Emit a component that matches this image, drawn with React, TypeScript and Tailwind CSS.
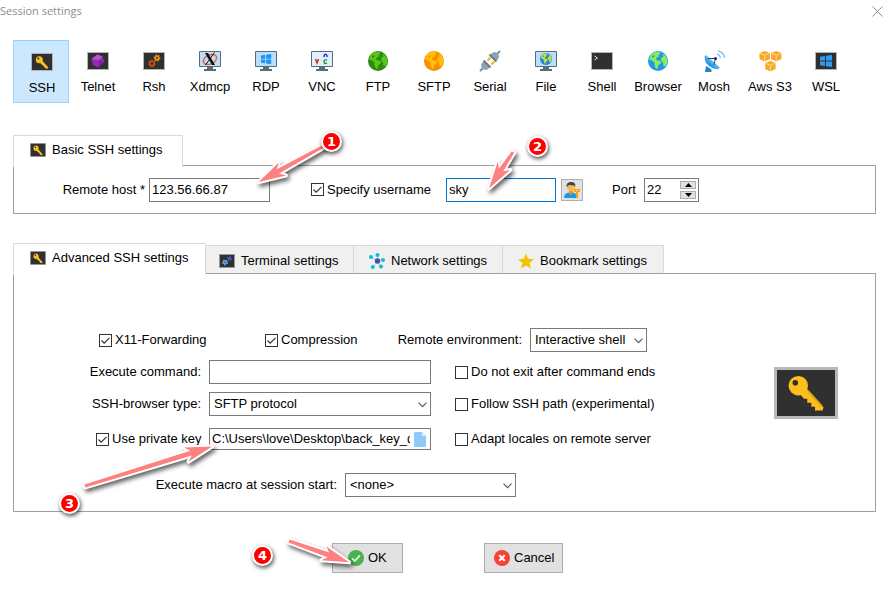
import { useState } from "react";
import type { ReactNode } from "react";
import clsx from "clsx";

/* ---------- icons ---------- */

const KeyIcon = ({ className }: { className: string }) => (
  <svg viewBox="0 0 64 52" className={className} preserveAspectRatio="none" aria-hidden="true">
    <rect width="64" height="52" fill="#b8b8b8" />
    <rect x="3" y="3" width="58" height="46" fill="#303030" />
    <path d="M33 22 L49.500 40.500 L48.500 43.600 H41 V39.700 H37.300 V35.700 H33.300 V31.700 H30 L26 27 Z" fill="#fcbf1e" />
    <path d="M34 24 L48 39.500" stroke="#e3a512" strokeWidth="2" />
    <circle cx="24.300" cy="18.700" r="9.700" fill="#fcbf1e" />
    <circle cx="21.300" cy="15.700" r="2.800" fill="#303030" />
  </svg>
);

/* heavier strokes so the key still reads at 16-22px */
const SmallKeyIcon = ({ className }: { className: string }) => (
  <svg viewBox="0 0 22 18" className={className} preserveAspectRatio="none" aria-hidden="true">
    <rect width="22" height="18" fill="#b4b4b4" />
    <rect x="1" y="1" width="20" height="16" fill="#303030" />
    <path d="M10.500 7 L17 14 V15.500 H14.500 L12.500 13 L10 11 L8.500 9 Z" fill="#fcbf1e" />
    <circle cx="8.300" cy="6.700" r="3.500" fill="#fcbf1e" />
    <circle cx="7.300" cy="5.600" r="1" fill="#303030" />
  </svg>
);

const Frame = ({ children }: { children?: ReactNode }) => (
  <svg viewBox="0 0 22 18" className="w-[22px] h-[18px]" aria-hidden="true">
    <rect width="22" height="18" fill="#b4b4b4" />
    <rect x="1" y="1" width="20" height="16" fill="#303030" />
    {children}
  </svg>
);

const Monitor = ({ children }: { children?: ReactNode }) => (
  <svg viewBox="0 0 22 20" className="w-[22px] h-5" aria-hidden="true">
    <rect width="22" height="16" rx="1" fill="#546e7a" />
    <rect x="1" y="1" width="20" height="14" fill="#bbdefb" />
    <path d="M8 16h6v2h3v2H5v-2h3z" fill="#546e7a" />
    {children}
  </svg>
);

const Gear = ({ cx, cy, r, color }: { cx: number; cy: number; r: number; color: string }) => (
  <g stroke={color} fill="none">
    <circle cx={cx} cy={cy} r={r} strokeWidth="1.5" />
    <circle cx={cx} cy={cy} r={r + 1} strokeWidth="1.2" strokeDasharray="1.4 1.4" />
  </g>
);

const GlobeShape = ({ sea, land }: { sea: string; land: string }) => (
  <>
    <circle cx="10" cy="10" r="10" fill={sea} />
    <path
      d="M6 1.300 L11 .8 L12.500 2.500 L10.500 4 L11 5.500 L8.500 6.500 L8 8.500 L10 9.500 L12.500 10 L13 12 L10.500 14 L9.500 17.500 L8 18 L6.500 14 L6.500 11.500 L4 9.500 L1.300 8.500 A9 9 0 0 1 6 1.300Z"
      fill={land}
    />
    <path d="M14.500 3 L17 4 A9 9 0 0 1 19.300 9 L19 12.500 L17.500 15.500 L15.500 15 L15 11.500 L13 9.500 L13.500 6.500 L15.500 5.500Z" fill={land} />
    <path d="M4 5.500l2-1.500 1 1-2 2z" fill={sea} />
  </>
);

const Globe = ({ sea, land }: { sea: string; land: string }) => (
  <svg viewBox="0 0 20 20" className="size-5" aria-hidden="true">
    <GlobeShape sea={sea} land={land} />
  </svg>
);

const WindowsShape = ({ color }: { color: string }) => (
  <path d="M0 1.800 L5 1 V5.500 H0Z M6 .8 L12 0 V5.500 H6Z M0 6.500 H5 V11 L0 10.200Z M6 6.500 H12 V12 L6 11.200Z" fill={color} />
);

const TelnetIcon = () => (
  <Frame>
    <path d="M10.500 2.500 L15.500 4.500 L17 10 L11.500 15.500 L6 13 L4.500 7Z" fill="#9c27b0" />
    <path d="M10.500 2.500 L15.500 4.500 L12 8 L4.500 7Z" fill="#ba55cb" />
    <path d="M12 8 L17 10 L11.500 15.500Z" fill="#7b1fa2" />
  </Frame>
);

const RshIcon = () => (
  <Frame>
    <Gear cx={9} cy={11.5} r={2.2} color="#d9500b" />
    <Gear cx={14} cy={6} r={1.8} color="#f39a16" />
  </Frame>
);

const XdmcpIcon = () => (
  <Monitor>
    <ellipse cx="11" cy="8.500" rx="7" ry="4.500" fill="none" stroke="#f0632a" strokeWidth="1.500" transform="rotate(-25 11 8.500)" />
    <path d="M6 2h3l7 12h-3z" fill="#111" />
    <path d="M15.500 1.500L6.500 14" stroke="#111" strokeWidth="1" />
  </Monitor>
);

const RdpIcon = () => (
  <Monitor>
    <g transform="translate(6 3) scale(.85)">
      <WindowsShape color="#1e96f3" />
    </g>
  </Monitor>
);

const VncIcon = () => (
  <Monitor>
    <rect x="1" y="1" width="20" height="14" fill="#e1effa" />
    <g fill="none" strokeWidth="1.400">
      <path d="M4.500 8l1.500 4 1.500-4" stroke="#e01b1b" />
      <path d="M13 6V4.500q1.500-2.500 3 0V6" stroke="#2424e8" />
      <path d="M16 9.200q-3-1-3 1.500t3 1.500" stroke="#159a2b" />
    </g>
  </Monitor>
);

const SerialIcon = () => (
  <svg viewBox="0 0 22 22" className="size-[22px]" aria-hidden="true">
    <path d="M1 21l3-3M18 4l3-3" stroke="#78909c" strokeWidth="2" />
    <path d="M8.500 10.500l3-3M12.500 14.500l3-3" stroke="#fbb017" strokeWidth="2" />
    <path d="M11.500 4.500Q15 0 18.500 3.500Q22 7 17.500 10.500Z" fill="#90a4ae" />
    <path d="M4.500 11.500Q0 15 3.500 18.500Q7 22 10.500 17.500Z" fill="#90a4ae" />
    <path d="M10.500 4.500l7 7M4.500 10.500l7 7" stroke="#607d8b" strokeWidth="2" />
  </svg>
);

const FileIcon = () => (
  <Monitor>
    <g transform="translate(5 2) scale(.6)">
      <GlobeShape sea="#1e88e5" land="#cddc39" />
    </g>
  </Monitor>
);

const ShellIcon = () => (
  <Frame>
    <path d="M3.500 4l3 2-3 2" fill="none" stroke="#e0e0e0" />
  </Frame>
);

const MoshIcon = () => (
  <svg viewBox="0 0 22 22" className="size-[22px]" aria-hidden="true">
    <path d="M3 16l3.500 2 2 1.500V22H2z" fill="#1e88c9" />
    <path d="M2 6Q.5 11 6 15.500T16 18.500Z" fill="#8ccbff" />
    <path d="M2 6L16 18.500Q11 20 6 16T2 6Z" fill="#2e9aee" />
    <path d="M2 6L16 18.500" stroke="#56b3f5" strokeWidth="2.500" />
    <path d="M4.500 8.500L12.500 8.500L11 15" fill="none" stroke="#37474f" />
    <circle cx="12.500" cy="8.500" r="1.600" fill="#1a237e" />
    <path d="M14 4q3 1 3.500 4M15 .800q5.500 1.200 6.500 6.700" fill="none" stroke="#64b5f6" strokeWidth="1.200" />
  </svg>
);

const Cube = ({ x, y }: { x: number; y: number }) => (
  <g transform={`translate(${x} ${y})`}>
    <path d="M5.200 0L10.400 2V8L5.200 10.500L0 8V2Z" fill="#f9a825" />
    <path d="M.5 2.300L5.200 4.200L9.900 2.300M5.200 4.200V10" fill="none" stroke="#ffe0a3" strokeWidth=".9" />
  </g>
);

const AwsIcon = () => (
  <svg viewBox="0 0 23 21" className="w-[23px] h-[21px]" aria-hidden="true">
    <Cube x={0.5} y={0} />
    <Cube x={12} y={0} />
    <Cube x={6.2} y={10} />
  </svg>
);

const WslIcon = () => (
  <Frame>
    <g transform="translate(5 3)">
      <WindowsShape color="#2f9df4" />
    </g>
  </Frame>
);

const TerminalTabIcon = () => (
  <svg viewBox="0 0 16 14" className="w-4 h-[14px]" aria-hidden="true">
    <rect width="16" height="14" fill="#9b9b9b" />
    <rect x="1" y="1" width="14" height="12" fill="#303030" />
    <Gear cx={6} cy={8.5} r={1.4} color="#64a8ee" />
    <Gear cx={10.5} cy={4.5} r={1} color="#4a57c8" />
  </svg>
);

const NetworkTabIcon = () => (
  <svg viewBox="0 0 16 16" className="size-4" aria-hidden="true">
    <path d="M8.500 8L2 4M8.500 8V2M8.500 8L14 7M8.500 8L12 14M8.500 8L4 14" stroke="#b6c6d4" />
    <g fill="#10bcd6">
      <circle cx="2" cy="4" r="2" />
      <circle cx="8.500" cy="2" r="2" />
      <circle cx="14" cy="7" r="2" />
      <circle cx="12" cy="13.500" r="2" />
      <circle cx="3.800" cy="14" r="2" />
    </g>
    <circle cx="8.500" cy="8" r="2.700" fill="#3f51b5" />
  </svg>
);

const StarTabIcon = () => (
  <svg viewBox="0 0 16 16" className="size-4" aria-hidden="true">
    <path d="M8 .5l2.200 5.300 5.800.4-4.500 3.700 1.500 5.600L8 12.500l-5 3 1.500-5.600L0 6.200l5.800-.4z" fill="#f4c300" />
  </svg>
);

const UserKeyIcon = () => (
  <svg viewBox="0 0 18 18" className="size-[18px]" aria-hidden="true">
    <path d="M1 17q0-5 5-5.500h4q4 .5 4 5.500z" fill="#1e9be0" />
    <path d="M6 9h4v3l-2 2-2-2z" fill="#f09030" />
    <circle cx="8" cy="6" r="4" fill="#ffb74d" />
    <path d="M3.500 6Q3 1.500 7.500 1Q13 .8 12.400 6L11.500 4.500L6 4Z" fill="#37474f" />
    <path d="M11 8h6v3h-2v6h-2v-6h-2z" fill="#ffa000" />
    <rect x="13" y="9" width="2" height="1" fill="#e1e1e1" />
  </svg>
);

const DocIcon = () => (
  <svg viewBox="0 0 12 15" className="w-3 h-[15px]" aria-hidden="true">
    <path d="M0 1q0-1 1-1h7l4 4v10q0 1-1 1H1q-1 0-1-1z" fill="#90caf9" />
    <path d="M8 0v4h4z" fill="#dceefc" />
  </svg>
);

const OkIcon = () => (
  <svg viewBox="0 0 16 16" className="size-4" aria-hidden="true">
    <circle cx="8" cy="8" r="8" fill="#4caf50" />
    <path d="M4 8.200l2.800 2.800L12 5.300" fill="none" stroke="#e8ffe8" strokeWidth="1.600" />
  </svg>
);

const CancelIcon = () => (
  <svg viewBox="0 0 16 16" className="size-4" aria-hidden="true">
    <circle cx="8" cy="8" r="8" fill="#f44336" />
    <path d="M5.300 5.300l5.400 5.400M10.700 5.300l-5.400 5.400" stroke="#fff" strokeWidth="2" />
  </svg>
);

/* ---------- form controls ---------- */

const Check = ({ label, checked = false, className }: { label: string; checked?: boolean; className?: string }) => (
  <label className={clsx("flex items-center gap-[3px] whitespace-nowrap", className)}>
    <span className="grid">
      <input
        type="checkbox"
        defaultChecked={checked}
        className="peer col-start-1 row-start-1 size-[13px] appearance-none border border-[#333] bg-white"
      />
      <svg
        viewBox="0 0 13 13"
        className="pointer-events-none invisible col-start-1 row-start-1 size-[13px] peer-checked:visible"
        aria-hidden="true"
      >
        <path d="M2.500 6.500l2.700 2.700 5.300-5.400" fill="none" stroke="#333" strokeWidth="1.200" />
      </svg>
    </span>
    {label}
  </label>
);

const Select = ({ id, options, className }: { id: string; options: string[]; className: string }) => (
  <div className={clsx("relative h-6", className)}>
    <select id={id} className="h-full w-full appearance-none border border-[#7a7a7a] bg-white pl-1 pr-5 outline-none">
      {options.map((o) => (
        <option key={o}>{o}</option>
      ))}
    </select>
    <svg viewBox="0 0 9 6" className="pointer-events-none absolute right-1 top-[10px] h-[6px] w-[9px]" aria-hidden="true">
      <path d="M.5.700l4 4 4-4" fill="none" stroke="#555" strokeWidth="1.100" />
    </svg>
  </div>
);

const Tab = ({ icon, label, active = false, className }: { icon: ReactNode; label: string; active?: boolean; className: string }) => (
  <button
    type="button"
    role="tab"
    aria-selected={active}
    className={clsx(
      "flex items-center gap-[6px] whitespace-nowrap border-t border-r border-[#dadada]",
      active ? "relative -mb-[2px] h-8 border-l bg-white pb-[3px] pl-4" : "h-7 bg-[#f0f0f0] pt-[2px]",
      className
    )}
  >
    {icon}
    {label}
  </button>
);

/* ---------- callouts ---------- */

const Arrow = ({ from, to }: { from: [number, number]; to: [number, number] }) => {
  const dx = from[0] - to[0];
  const dy = from[1] - to[1];
  const len = Math.hypot(dx, dy);
  const angle = (Math.atan2(dy, dx) * 180) / Math.PI;
  return (
    <path
      transform={`translate(${to[0]} ${to[1]}) rotate(${angle})`}
      d={`M2 0 L29 -7.500 L24 -2.500 L${len} -1.500 V1.500 L24 2.500 L29 7.500 Z`}
      fill="#ff8080"
      stroke="#fff"
      strokeWidth="4"
      strokeLinejoin="round"
      paintOrder="stroke"
    />
  );
};

const Badge = ({ n, className }: { n: number; className: string }) => (
  <span
    className={clsx(
      "absolute flex size-[21px] items-center justify-center rounded-full border-2 border-white bg-[#fe0000] font-['DejaVu_Sans',sans-serif] text-[13px] font-bold leading-none text-white shadow-[1px_2px_4px_rgba(0,0,0,0.7)]",
      className
    )}
  >
    {n}
  </span>
);

const sessions: { name: string; icon: ReactNode }[] = [
  { name: "SSH", icon: <SmallKeyIcon className="w-[22px] h-[18px]" /> },
  { name: "Telnet", icon: <TelnetIcon /> },
  { name: "Rsh", icon: <RshIcon /> },
  { name: "Xdmcp", icon: <XdmcpIcon /> },
  { name: "RDP", icon: <RdpIcon /> },
  { name: "VNC", icon: <VncIcon /> },
  { name: "FTP", icon: <Globe sea="#2e8b0e" land="#55c718" /> },
  { name: "SFTP", icon: <Globe sea="#fb8c00" land="#ffc107" /> },
  { name: "Serial", icon: <SerialIcon /> },
  { name: "File", icon: <FileIcon /> },
  { name: "Shell", icon: <ShellIcon /> },
  { name: "Browser", icon: <Globe sea="#2196f3" land="#8bed4f" /> },
  { name: "Mosh", icon: <MoshIcon /> },
  { name: "Aws S3", icon: <AwsIcon /> },
  { name: "WSL", icon: <WslIcon /> },
];

export default function App() {
  const [session, setSession] = useState("SSH");
  const [port, setPort] = useState(22);

  return (
    <div className="relative min-h-screen bg-white pb-7 font-['Liberation_Sans',Arial,sans-serif] text-[13px] leading-4 text-black">
      <header className="flex h-[22px] items-center justify-between pr-[9px]">
        <h1 className="font-['Open_Sans',sans-serif] text-[11px] text-[#8c8c8c]">Session settings</h1>
        <button type="button" aria-label="Close">
          <svg viewBox="0 0 11 11" className="size-[11px]" aria-hidden="true">
            <path d="M.5.5l10 10M10.500.5l-10 10" stroke="#909090" />
          </svg>
        </button>
      </header>

      <main className="pl-[13px] pr-4">
        <nav className="mt-[18px] flex">
          {sessions.map((s) => (
            <button
              key={s.name}
              type="button"
              onClick={() => setSession(s.name)}
              className={clsx(
                "flex h-[63px] w-14 shrink-0 flex-col items-center gap-[7px] whitespace-nowrap border pl-[2px]",
                s.name === session ? "border-[#99d1ff] bg-[#cce8ff] pt-[10px]" : "border-transparent pt-[9px]"
              )}
            >
              <span className="flex h-[22px] items-center">{s.icon}</span>
              {s.name}
            </button>
          ))}
        </nav>

        {/* Basic settings */}
        <section className="mt-8">
          <div role="tablist" className="flex items-end">
            <Tab active icon={<SmallKeyIcon className="w-4 h-[14px]" />} label="Basic SSH settings" className="w-[170px]" />
          </div>
          <div className="flex h-[49px] items-center border border-[#a0a0a0]">
            <label htmlFor="host" className="mr-1 w-[131px] text-right">
              Remote host *
            </label>
            <input id="host" defaultValue="123.56.66.87" className="h-6 w-[121px] border border-[#7a7a7a] px-[2px] outline-none" />
            <Check label="Specify username" checked className="ml-[41px] w-[135px]" />
            <input
              aria-label="Username"
              defaultValue="sky"
              className="h-6 w-[110px] border border-[#0078d7] px-[2px] outline-none"
            />
            <button
              type="button"
              aria-label="Manage users"
              className="ml-[5px] flex size-[22px] items-center justify-center border border-[#adadad] bg-[#e1e1e1]"
            >
              <UserKeyIcon />
            </button>
            <label htmlFor="port" className="ml-[29px] w-8">
              Port
            </label>
            <div className="flex h-6 w-[55px] items-center border border-[#7a7a7a] pr-[2px]">
              <input
                id="port"
                value={port}
                onChange={(e) => setPort(Number(e.target.value) || 0)}
                className="w-full min-w-0 px-[2px] outline-none"
              />
              <div className="flex shrink-0 flex-col gap-[2px]">
                <button
                  type="button"
                  aria-label="Increase port"
                  onClick={() => setPort(port + 1)}
                  className="flex h-2 w-4 items-center justify-center border border-[#adadad] bg-[#e1e1e1]"
                >
                  <svg viewBox="0 0 7 4" className="h-1 w-[7px]" aria-hidden="true">
                    <path d="M0 4L3.500 0L7 4z" />
                  </svg>
                </button>
                <button
                  type="button"
                  aria-label="Decrease port"
                  onClick={() => setPort(port - 1)}
                  className="flex h-2 w-4 items-center justify-center border border-[#adadad] bg-[#e1e1e1]"
                >
                  <svg viewBox="0 0 7 4" className="h-1 w-[7px]" aria-hidden="true">
                    <path d="M0 0L3.500 4L7 0z" />
                  </svg>
                </button>
              </div>
            </div>
          </div>
        </section>

        {/* Advanced settings */}
        <section className="mt-[29px]">
          <div role="tablist" className="flex items-end">
            <Tab active icon={<SmallKeyIcon className="w-4 h-[14px]" />} label="Advanced SSH settings" className="w-[193px]" />
            <Tab icon={<TerminalTabIcon />} label="Terminal settings" className="w-[148px] pl-[13px]" />
            <Tab icon={<NetworkTabIcon />} label="Network settings" className="w-[149px] pl-[15px]" />
            <Tab icon={<StarTabIcon />} label="Bookmark settings" className="w-[161px] pl-[15px]" />
          </div>
          <div className="flex items-center border border-[#a0a0a0]">
            <div className="flex-1 pb-[14px] pt-[54px]">
              <div className="flex items-center">
                <Check label="X11-Forwarding" checked className="ml-[85px] w-[166px]" />
                <Check label="Compression" checked />
                <label htmlFor="env" className="ml-auto mr-2 whitespace-nowrap">
                  Remote environment:
                </label>
                <Select id="env" options={["Interactive shell"]} className="mr-[127px] w-[117px]" />
              </div>
              <div className="mt-2 flex items-center">
                <label htmlFor="command" className="mr-2 w-[187px] text-right">
                  Execute command:
                </label>
                <input id="command" className="h-6 w-[222px] border border-[#7a7a7a] px-[2px] outline-none" />
                <Check label="Do not exit after command ends" className="ml-6" />
              </div>
              <div className="mt-2 flex items-center">
                <label htmlFor="browser" className="mr-2 w-[187px] text-right">
                  SSH-browser type:
                </label>
                <Select id="browser" options={["SFTP protocol"]} className="w-[222px]" />
                <Check label="Follow SSH path (experimental)" className="ml-6" />
              </div>
              <div className="mt-3 flex items-center">
                <Check label="Use private key" checked className="ml-[82px] w-[113px]" />
                <div className="flex h-[22px] w-[222px] items-center border border-[#7a7a7a] pr-1">
                  <input
                    aria-label="Private key path"
                    defaultValue="C:\Users\love\Desktop\back_key_dir"
                    className="mr-1 w-full min-w-0 pl-[2px] outline-none"
                  />
                  <button type="button" aria-label="Browse" className="shrink-0">
                    <DocIcon />
                  </button>
                </div>
                <Check label="Adapt locales on remote server" className="ml-6" />
              </div>
              <div className="mt-[23px] flex items-center">
                <label htmlFor="macro" className="mr-2 w-[323px] text-right">
                  Execute macro at session start:
                </label>
                <Select id="macro" options={["<none>"]} className="w-[171px]" />
              </div>
            </div>
            <KeyIcon className="mr-[37px] h-[52px] w-16 shrink-0" />
          </div>
        </section>

        <div className="mt-[31px] flex pl-[319px]">
          <button type="button" className="flex h-[30px] w-[71px] items-center gap-1 border border-[#adadad] bg-[#e1e1e1] pl-[15px]">
            <OkIcon />
            OK
          </button>
          <button type="button" className="ml-[81px] flex h-[30px] w-[79px] items-center gap-1 border border-[#adadad] bg-[#e1e1e1] pl-[9px]">
            <CancelIcon />
            Cancel
          </button>
        </div>
      </main>

      {/* Numbered steps drawn over the dialog */}
      <svg
        width="560"
        height="600"
        className="pointer-events-none absolute left-0 top-0 drop-shadow-[2px_3px_2px_rgba(0,0,0,0.6)]"
        aria-hidden="true"
      >
        <Arrow from={[324, 146]} to={[257, 183]} />
        <Arrow from={[513, 152]} to={[488, 190]} />
        <Arrow from={[85, 486]} to={[214, 446]} />
        <Arrow from={[289, 541]} to={[351, 563]} />
      </svg>
      <Badge n={1} className="left-[321px] top-[131px]" />
      <Badge n={2} className="left-[527px] top-[136px]" />
      <Badge n={3} className="left-[59px] top-[493px]" />
      <Badge n={4} className="left-[252px] top-[545px]" />
    </div>
  );
}
